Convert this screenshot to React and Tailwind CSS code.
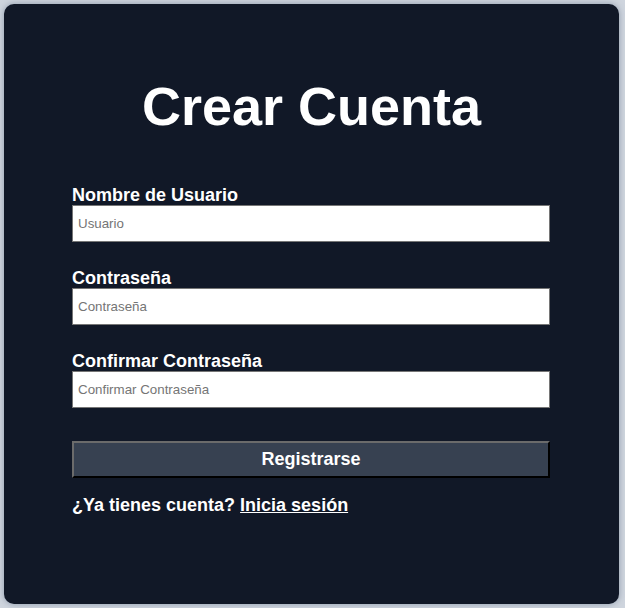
import React, { useState } from "react";

function Field({ label, type = "text", placeholder, value, onChange }) {
    return (
        <div className="flex flex-col">
            <label className="text-[18px] leading-[20px] font-bold text-white">{label}</label>
            <input
                type={type}
                placeholder={placeholder}
                value={value}
                onChange={onChange}
                className="h-[37px] w-full bg-white border border-[#767676] px-[5px] text-[13.333px] text-black placeholder:text-[#757575] outline-none"
            />
        </div>
    );
}

export default function App() {
    const [form, setForm] = useState({ user: "", pass: "", confirm: "" });

    const update = (key) => (e) => setForm((f) => ({ ...f, [key]: e.target.value }));

    return (
        <div
            className="min-h-[608px] w-[625px] bg-[#cfd5de] p-[4px]"
            style={{ fontFamily: '"Liberation Sans", Arial, sans-serif' }}
        >
            <div className="h-[600px] w-[615px] rounded-[10px] bg-[#111827] shadow-[0_0_6px_rgba(100,116,139,0.6)] pt-[74px] px-[68px]">
                <h1 className="text-center text-[54px] leading-[56px] font-bold text-white">
                    Crear Cuenta
                </h1>

                <form
                    className="mt-[51px] w-[478px] flex flex-col gap-[26px]"
                    onSubmit={(e) => e.preventDefault()}
                >
                    <Field
                        label="Nombre de Usuario"
                        placeholder="Usuario"
                        value={form.user}
                        onChange={update("user")}
                    />
                    <Field
                        label="Contraseña"
                        type="password"
                        placeholder="Contraseña"
                        value={form.pass}
                        onChange={update("pass")}
                    />
                    <Field
                        label="Confirmar Contraseña"
                        type="password"
                        placeholder="Confirmar Contraseña"
                        value={form.confirm}
                        onChange={update("confirm")}
                    />

                    <button
                        type="submit"
                        className="mt-[7px] h-[37px] w-full bg-[#374151] border-2 border-t-[#6b6b6b] border-l-[#6b6b6b] border-b-black border-r-black text-[18px] font-bold text-white"
                    >
                        Registrarse
                    </button>
                </form>

                <p className="mt-[17px] text-[18px] leading-[20px] font-bold text-white">
                    ¿Ya tienes cuenta?{" "}
                    <a href="#" className="underline">
                        Inicia sesión
                    </a>
                </p>
            </div>
        </div>
    );
}
